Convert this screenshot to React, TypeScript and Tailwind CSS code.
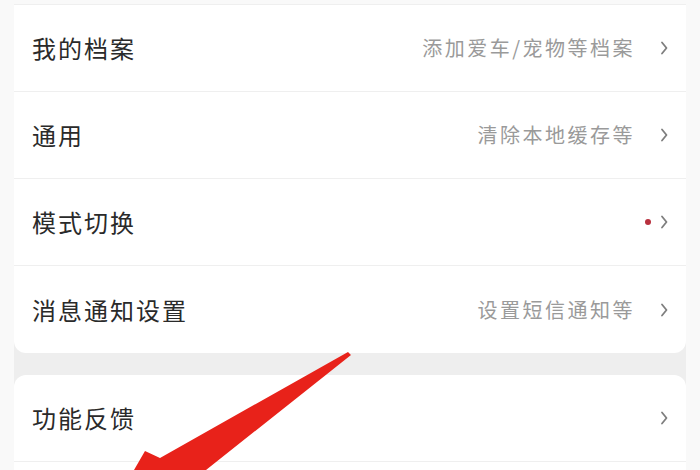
import React from "react"

type Row = { title: string; hint?: string; dot?: boolean }

const groupOne: Row[] = [
  { title: "我的档案", hint: "添加爱车/宠物等档案" },
  { title: "通用", hint: "清除本地缓存等" },
  { title: "模式切换", dot: true },
  { title: "消息通知设置", hint: "设置短信通知等" },
]

const groupTwo: Row[] = [{ title: "功能反馈" }, { title: "" }]

function Chevron() {
  return (
    <svg width="9" height="16" viewBox="0 0 9 16" className="shrink-0">
      <path d="M2 2.5 L6.5 8 L2 13.5" fill="none" stroke="#7e7e7e" strokeWidth="1.8" strokeLinecap="round" strokeLinejoin="round" />
    </svg>
  )
}

function SettingRow({ row, last }: { row: Row; last?: boolean }) {
  return (
    <div className={`flex h-[87px] items-center pl-[18px] pr-[17px] ${last ? "" : "border-b border-[#efefef]"}`}>
      <span className="flex-1 text-[24px] tracking-[2px] text-[#2a2a2a]">{row.title}</span>
      {row.hint && <span className="mr-[25px] text-[20px] tracking-[2.5px] text-[#9a9a9a]">{row.hint}</span>}
      {row.dot && <span className="mr-[9px] h-[6px] w-[6px] rounded-full bg-[#b8303e]" />}
      <Chevron />
    </div>
  )
}

export default function App() {
  return (
    <div
      className="relative h-[470px] w-[700px] overflow-hidden bg-[#f9f9f9]"
      style={{ fontFamily: '"Noto Sans CJK SC", "Noto Sans", sans-serif' }}
    >
      <div className="mx-[14px] mt-[4px] flex flex-col gap-[22px] bg-[#eeeeee]">
        <div className="rounded-b-[12px] border-t border-[#efefef] bg-white">
          {groupOne.map((row, i) => (
            <SettingRow key={row.title} row={row} last={i === groupOne.length - 1} />
          ))}
        </div>
        <div className="rounded-t-[12px] bg-white">
          {groupTwo.map((row, i) => (
            <SettingRow key={i} row={row} />
          ))}
        </div>
      </div>

      <svg className="pointer-events-none absolute left-0 top-0" width="700" height="470" viewBox="0 0 700 470">
        <polygon
          points="348,352 160,458 145,451 134,470 206,470 351,355"
          fill="#e8221a"
        />
      </svg>
    </div>
  )
}
